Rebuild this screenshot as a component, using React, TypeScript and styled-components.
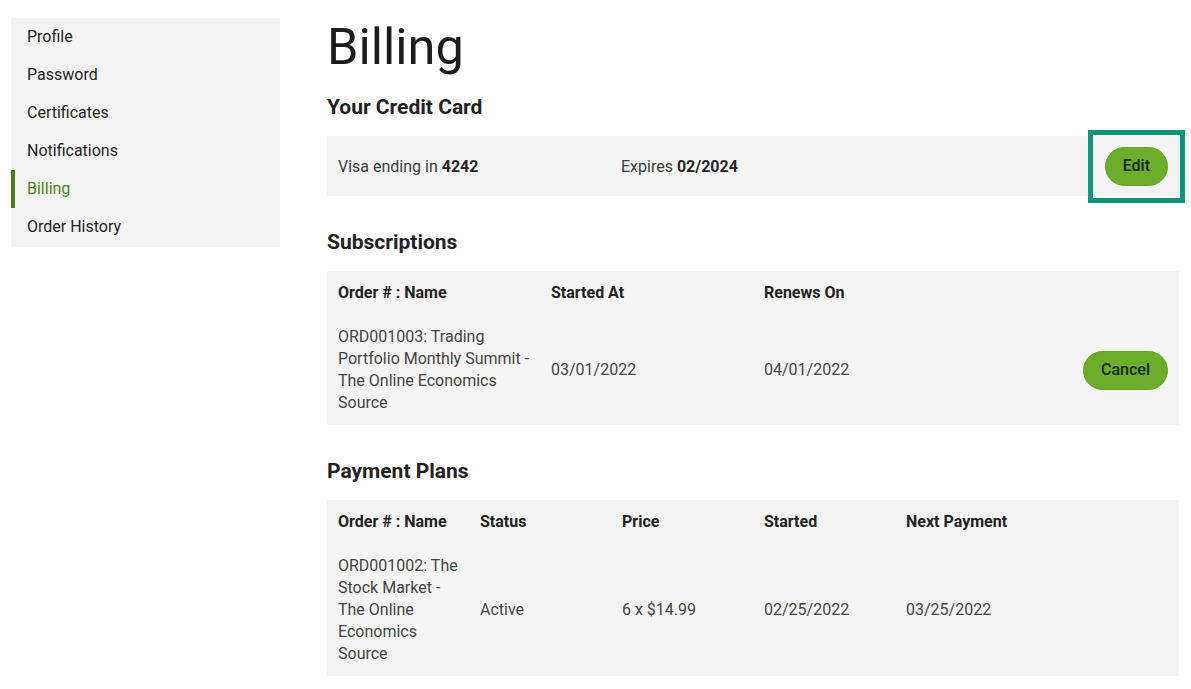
import React from "react";
import styled, { createGlobalStyle } from "styled-components";

const GlobalStyle = createGlobalStyle`
  * { box-sizing: border-box; }
  body {
    margin: 0;
    background: #ffffff;
    font-family: Roboto, "Liberation Sans", Arial, sans-serif;
    color: #222;
  }
`;

const Page = styled.div`
  display: flex;
  align-items: flex-start;
  gap: 47px;
  padding: 16px 12px 16px 11px;
`;

const Sidebar = styled.nav`
  flex: 0 0 269px;
  margin-top: 2px;
  background: #f3f3f3;
  display: flex;
  flex-direction: column;
  padding-bottom: 1px;
`;

const NavItem = styled.a<{ $active?: boolean }>`
  display: flex;
  align-items: center;
  height: 38px;
  padding: 0 0 2px 12px;
  border-left: 4px solid ${(p) => (p.$active ? "#4a7c1d" : "transparent")};
  font-size: 16px;
  color: ${(p) => (p.$active ? "#4f7f22" : "#1e1e1e")};
  text-decoration: none;
  cursor: pointer;
`;

const Main = styled.main`
  flex: 1;
  min-width: 0;
`;

const Title = styled.h1`
  margin: 0;
  font-size: 50.5px;
  line-height: 62px;
  font-weight: 400;
  color: #1c1c1c;
`;

const Section = styled.section<{ $first?: boolean }>`
  margin-top: ${(p) => (p.$first ? "17px" : "34px")};
`;

const Heading = styled.h2`
  margin: 0 0 17px;
  font-size: 21px;
  line-height: 24px;
  font-weight: 700;
  color: #222;
`;

const CardRow = styled.div`
  display: flex;
  align-items: center;
  height: 60px;
  padding: 0 11px;
  background: #f4f4f4;
  font-size: 16px;
  color: #3c3c3c;
`;

const CardField = styled.div<{ $width?: number }>`
  flex: ${(p) => (p.$width ? `0 0 ${p.$width}px` : "1")};
  b {
    font-weight: 700;
    color: #262626;
  }
`;

const Highlight = styled.span`
  display: inline-flex;
  margin: -17px;
  padding: 12px;
  border: 5px solid #0f957a;
`;

const Button = styled.button`
  font-family: Roboto, "Liberation Sans", Arial, sans-serif;
  font-size: 16px;
  line-height: 22px;
  font-weight: 500;
  color: #17260a;
  background: #6cad2b;
  border: 1px solid #62a324;
  border-radius: 20px;
  padding: 7.5px 17px;
  cursor: pointer;
`;

const Table = styled.table`
  width: 100%;
  table-layout: fixed;
  border-collapse: collapse;
  background: #f4f4f4;
  font-size: 16px;
  line-height: 22px;
`;

const Th = styled.th`
  text-align: left;
  font-weight: 700;
  color: #222;
  padding: 11px 6px 11px 11px;
  vertical-align: middle;
`;

const Td = styled.td<{ $right?: boolean }>`
  color: #444;
  padding: ${(p) => (p.$right ? "11px 11px" : "11px 6px 11px 11px")};
  vertical-align: middle;
  text-align: ${(p) => (p.$right ? "right" : "left")};
`;

const navItems = ["Profile", "Password", "Certificates", "Notifications", "Billing", "Order History"];

export default function App() {
  return (
    <>
      <GlobalStyle />
      <Page>
        <Sidebar>
          {navItems.map((n) => (
            <NavItem key={n} $active={n === "Billing"}>
              {n}
            </NavItem>
          ))}
        </Sidebar>
        <Main>
          <Title>Billing</Title>

          <Section $first>
            <Heading>Your Credit Card</Heading>
            <CardRow>
              <CardField $width={283}>
                Visa ending in <b>4242</b>
              </CardField>
              <CardField>
                Expires <b>02/2024</b>
              </CardField>
              <Highlight>
                <Button>Edit</Button>
              </Highlight>
            </CardRow>
          </Section>

          <Section>
            <Heading>Subscriptions</Heading>
            <Table>
              <thead>
                <tr>
                  <Th>Order # : Name</Th>
                  <Th>Started At</Th>
                  <Th>Renews On</Th>
                  <Th />
                </tr>
              </thead>
              <tbody>
                <tr>
                  <Td>ORD001003: Trading Portfolio Monthly Summit - The Online Economics Source</Td>
                  <Td>03/01/2022</Td>
                  <Td>04/01/2022</Td>
                  <Td $right>
                    <Button>Cancel</Button>
                  </Td>
                </tr>
              </tbody>
            </Table>
          </Section>

          <Section>
            <Heading>Payment Plans</Heading>
            <Table>
              <thead>
                <tr>
                  <Th>Order # : Name</Th>
                  <Th>Status</Th>
                  <Th>Price</Th>
                  <Th>Started</Th>
                  <Th>Next Payment</Th>
                  <Th />
                </tr>
              </thead>
              <tbody>
                <tr>
                  <Td>ORD001002: The Stock Market - The Online Economics Source</Td>
                  <Td>Active</Td>
                  <Td>6 x $14.99</Td>
                  <Td>02/25/2022</Td>
                  <Td>03/25/2022</Td>
                  <Td />
                </tr>
              </tbody>
            </Table>
          </Section>
        </Main>
      </Page>
    </>
  );
}
